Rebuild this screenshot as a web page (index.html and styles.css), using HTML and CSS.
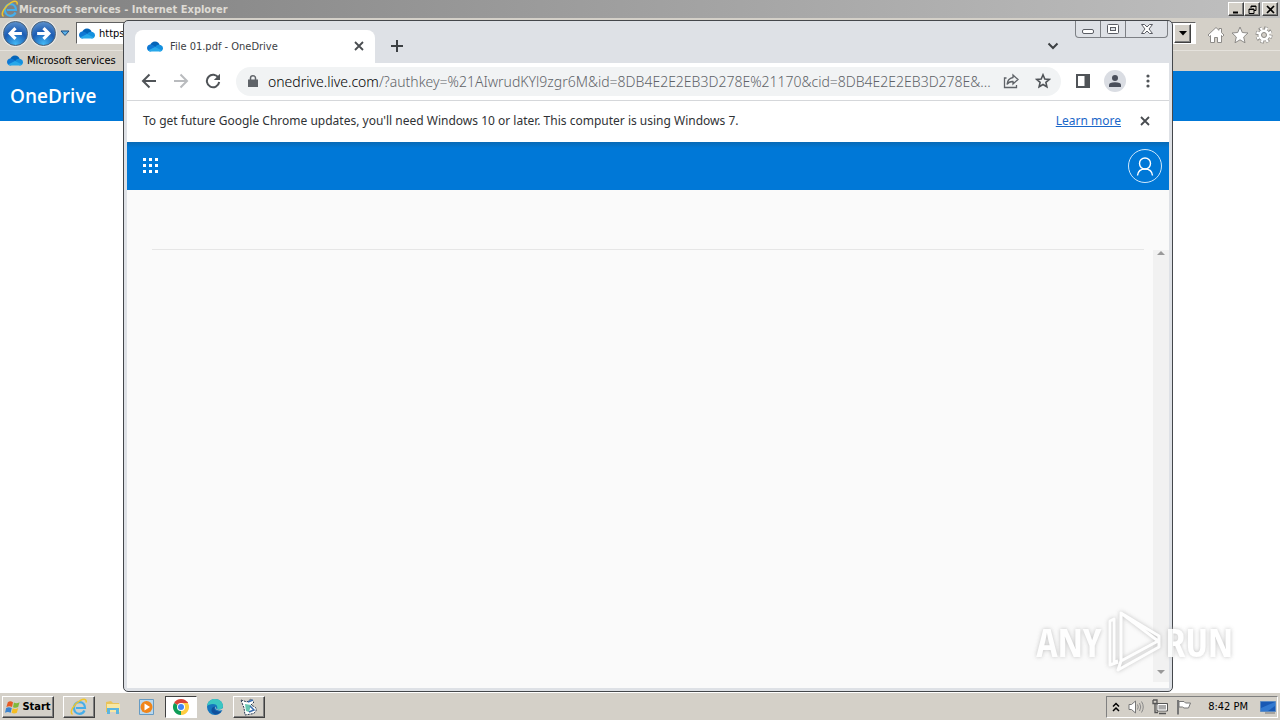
FILE: index.html
```html
<!DOCTYPE html>
<html lang="en">
<head>
<meta charset="utf-8">
<title>Desktop</title>
<link rel="stylesheet" href="styles.css">
</head>
<body>
<svg class="defs" aria-hidden="true">
  <symbol id="cloud" viewBox="0 0 16 11">
    <path d="M3 5C3.500 2 5.500 .500 8 .500C10.500 .500 12 2 12.600 3.800L8 7Z" fill="#0364b8"/>
    <path d="M3.500 3.600C1.500 3.600 0 5.200 0 7.100C0 9 1.500 10.500 3.500 10.500L11 7L6 4.200C5.200 3.800 4.400 3.600 3.500 3.600Z" fill="#0f78d4"/>
    <path d="M12 3.700C14.200 3.700 16 5.200 16 7.200C16 9.200 14.500 10.500 12.700 10.500L8 6.500C8.700 4.800 10 3.700 12 3.700Z" fill="#1490df"/>
    <path d="M1 9.500L8 6L15 9.600C14.500 10.200 13.700 10.500 12.700 10.500H3.500C2.500 10.500 1.600 10.100 1 9.500Z" fill="#28a8ea"/>
  </symbol>
  <symbol id="ie" viewBox="0 0 18 18">
    <path d="M14.500 12.500C13.500 14.800 11.700 15.800 9.500 15.800C6 15.800 4 13.200 4 10C4 6.700 6.200 4.200 9.500 4.200C12.800 4.200 15 6.500 15 10H6" fill="none" stroke="#45aeea" stroke-width="2.200"/>
    <path d="M2.500 16.500C-1 14 4 6 10 2.700C14 .500 17 1 16 4.500" fill="none" stroke="#f0c52c" stroke-width="1.500"/>
  </symbol>
  <symbol id="arrow" viewBox="0 0 16 16">
    <path d="M15 8H2M8.500 1.500L2 8L8.500 14.500" fill="none" stroke="currentColor" stroke-width="2"/>
  </symbol>
  <symbol id="cross" viewBox="0 0 10 10">
    <path d="M1 1L9 9M9 1L1 9" fill="none" stroke="currentColor" stroke-width="1.800"/>
  </symbol>
</svg>

<div class="desktop">
  <section class="ie">
    <header class="ie-title">
      <svg class="i18"><use href="#ie"/></svg>
      <span class="ie-name">Microsoft services - Internet Explorer</span>
      <div class="classic-buttons">
        <button class="raised" aria-label="Minimize"><svg viewBox="0 0 9 9"><path d="M1 7.500H6" stroke="#000" stroke-width="2"/></svg></button>
        <button class="raised" aria-label="Restore"><svg viewBox="0 0 9 9"><path d="M3 3V1H8V5.500H6M1 4H6V8.500H1ZM3 1.500H8M1 4.500H6" fill="none" stroke="#000"/></svg></button>
        <button class="raised last" aria-label="Close"><svg viewBox="0 0 9 9"><path d="M1 1L8 8M8 1L1 8" stroke="#000" stroke-width="1.700"/></svg></button>
      </div>
    </header>
    <div class="ie-nav">
      <button class="orb" aria-label="Back"><svg viewBox="0 0 16 16"><path d="M14 8H3M8 3L3 8L8 13" fill="none" stroke="#fff" stroke-width="3"/></svg></button>
      <button class="orb" aria-label="Forward"><svg viewBox="0 0 16 16"><path d="M2 8H13M8 3L13 8L8 13" fill="none" stroke="#fff" stroke-width="3"/></svg></button>
      <button class="plain recent" aria-label="Recent pages"><svg viewBox="0 0 10 7"><path d="M1 1H9L5 5.500Z" fill="#5cb2ea" stroke="#174a80"/></svg></button>
      <div class="ie-address">
        <svg class="cloud"><use href="#cloud"/></svg>
        <input class="ie-input" aria-label="Address" value="https://onedrive.live.com/">
        <button class="raised drop" aria-label="Show address list"><svg viewBox="0 0 8 5"><path d="M0 0H8L4 4.500Z" fill="#000"/></svg></button>
      </div>
      <div class="ie-tools">
        <button class="plain" aria-label="Home"><svg viewBox="0 0 18 18"><path d="M1 9L9 1.500L12 4.300V2.500H14.500V6.700L17 9L15.500 10.500L14.500 9.500V16.500H10.500V11.500H7.500V16.500H3.500V9.500L2.500 10.500Z" fill="#fff" stroke="#8d8b88"/></svg></button>
        <button class="plain" aria-label="Favorites"><svg viewBox="0 0 18 18"><path d="M9 1L11.300 6.500L17 7L12.700 11L14 16.800L9 13.800L4 16.800L5.300 11L1 7L6.700 6.500Z" fill="#fff" stroke="#8d8b88"/></svg></button>
        <button class="plain" aria-label="Tools"><svg viewBox="0 0 18 18"><circle cx="9" cy="9" r="6.700" fill="none" stroke="#8d8b88" stroke-width="3.600" stroke-dasharray="3.300 1.960"/><circle cx="9" cy="9" r="5.900" fill="none" stroke="#8d8b88" stroke-width="1"/><circle cx="9" cy="9" r="6.500" fill="none" stroke="#fff" stroke-width="2.800" stroke-dasharray="2.200 2.900" stroke-dashoffset="-.500"/><circle cx="9" cy="9" r="4" fill="#d4d0c8" stroke="#fff" stroke-width="3"/><circle cx="9" cy="9" r="2.500" fill="#d4d0c8" stroke="#8d8b88"/></svg></button>
      </div>
    </div>
    <div class="ie-favs">
      <svg class="cloud"><use href="#cloud"/></svg>
      <span>Microsoft services</span>
    </div>
    <div class="ie-brand">OneDrive</div>
    <div class="ie-page"></div>
  </section>

  <footer class="taskbar">
    <button class="raised start">
      <svg viewBox="0 0 17 16"><path d="M3 3Q5.500 1 8.500 3L7.500 8Q4.500 6.500 1.500 8Z" fill="#e65b25"/><path d="M9.500 3.300Q12 5 15.500 3L14 8Q11.500 9.500 8.500 8.200Z" fill="#80b93b"/><path d="M1.200 9Q4 7.500 7.200 9L6 14Q3 12.500 0 14Z" fill="#3a83cf"/><path d="M8.200 9.300Q11 11 14 9L12.600 14Q10 15.500 7 14.200Z" fill="#f5bd22"/></svg>
      Start
    </button>
    <div class="tasks">
      <button class="task raised" aria-label="Internet Explorer"><svg class="i18"><use href="#ie"/></svg></button>
      <button class="task" aria-label="File Explorer"><svg viewBox="0 0 18 18"><path d="M2 4L7 3L9 5H15V14H2Z" fill="#e9c35b"/><path d="M3 6H16V14H3Z" fill="#f8e7a2"/><path d="M3 16V10H15V16H12V12H6V16Z" fill="#5cb5df"/></svg></button>
      <button class="task" aria-label="Media Player"><svg viewBox="0 0 18 18"><path d="M1.500 1.500H15.500V16.500H1.500Z" fill="#b9d8ee" stroke="#669bc3"/><circle cx="8.500" cy="9" r="6" fill="#f08519"/><path d="M6.500 5.500L12 9L6.500 12.500Z" fill="#fff"/></svg></button>
      <button class="task active" aria-label="Google Chrome"><svg viewBox="0 0 18 18"><path d="M9 9L2.070 5A8 8 0 0 1 15.930 5Z" fill="#db4437"/><path d="M9 9L15.930 5A8 8 0 0 1 9 17Z" fill="#ffcd40"/><path d="M9 9L9 17A8 8 0 0 1 2.070 5Z" fill="#0f9d58"/><path d="M9 5H16L13 11Z" fill="#ffcd40"/><path d="M9 5H16L15.500 4H8Z" fill="#db4437"/><circle cx="9" cy="9" r="4" fill="#fff"/><circle cx="9" cy="9" r="3" fill="#4285f4"/></svg></button>
      <button class="task" aria-label="Microsoft Edge"><svg viewBox="0 0 18 18"><circle cx="9" cy="9" r="8" fill="#1676bd"/><path d="M1 8C2 3 5 1 9 1C14 1 17 4.500 17 8C17 11 14.500 12 11 11.500C12 9 11 6 7 6C4 6 2 7 1 8Z" fill="#3bc6c2"/><path d="M9 8.500C7.500 11 9 14 15.500 13.500C13 16 10 17 8 16C4 14 5 9 9 8.500Z" fill="#10509c"/><path d="M9.500 8.500C8.500 11 11 13.500 17 12V10C15 12 12 12 10.500 11.200Z" fill="#d4d0c8"/></svg></button>
      <button class="task raised" aria-label="Utility"><svg viewBox="0 0 18 18"><path d="M1 2L7 4L11 1L14 4L11 7L15 9C18 12 15 16 11 16L5 17L4 10Z" fill="#fff" stroke="#26384e" stroke-dasharray="2 1"/><path d="M5 6L11 7L9 14L6 13Z" fill="#69c6b2"/><path d="M8 4L13 2M10 8L14 12L9 14" fill="none" stroke="#376cae" stroke-width="1.500"/></svg></button>
    </div>
    <div class="tray">
      <button class="plain chev" aria-label="Show hidden icons"><svg viewBox="0 0 8 10"><path d="M1 4.500L4 1.500L7 4.500M1 9L4 6L7 9" fill="none" stroke="#000" stroke-width="1.500"/></svg></button>
      <button class="plain" aria-label="Volume"><svg viewBox="0 0 16 16"><path d="M1 5.500H3.500L7.500 2V14L3.500 10.500H1Z" fill="#fff" stroke="#777"/><path d="M9.500 5.500Q11 8 9.500 10.500M11.500 4Q14 8 11.500 12M13.500 2.500Q17 8 13.500 13.500" fill="none" stroke="#888"/></svg></button>
      <button class="plain" aria-label="Network"><svg viewBox="0 0 16 16"><path d="M5 4.500H15.500V12H5Z" fill="#bbb" stroke="#555"/><path d="M6 5.500H14.500V11H6Z" fill="#aaa" stroke="#fff"/><path d="M7 14.500H14M1 1V4.500H5V1H1M3 4.500V13.500H6" fill="none" stroke="#555" stroke-width="1.300"/></svg></button>
      <button class="plain" aria-label="Action Center"><svg viewBox="0 0 16 16"><path d="M2 1V15.500" stroke="#777" stroke-width="2"/><path d="M3 2.500H8L9.500 4H14.500L12.500 9H8L6.500 8H3Z" fill="#fff" stroke="#777"/></svg></button>
      <span class="clock">8:42 PM</span>
      <button class="plain" aria-label="Show desktop"><svg viewBox="0 0 16 16"><path d="M.500 2.500H15.500V12.500H.500Z" fill="#1959b4" stroke="#5b8ac2"/><path d="M1 9L15 3V7L8 12H1Z" fill="#3279d0"/><path d="M5 14H15" stroke="#777"/></svg></button>
    </div>
  </footer>

  <section class="chrome">
    <header class="tabstrip">
      <div class="tab">
        <svg class="cloud"><use href="#cloud"/></svg>
        <span class="tab-name">File 01.pdf - OneDrive</span>
        <button class="plain x" aria-label="Close tab"><svg><use href="#cross"/></svg></button>
      </div>
      <button class="plain newtab" aria-label="New tab"><svg viewBox="0 0 12 12"><path d="M6 0V12M0 6H12" stroke="#3c4043" stroke-width="2"/></svg></button>
      <button class="plain search" aria-label="Search tabs"><svg viewBox="0 0 12 8"><path d="M1.500 1.500L6 6L10.500 1.500" fill="none" stroke="#3c4043" stroke-width="2"/></svg></button>
      <div class="caption">
        <button aria-label="Minimize"><svg viewBox="0 0 14 12"><rect x="1.500" y="6.500" width="11" height="4" rx="1.500" fill="#fff" stroke="#5a5d64"/></svg></button>
        <button aria-label="Maximize"><svg viewBox="0 0 14 12"><rect x="1.500" y="1.500" width="11" height="9" rx="1" fill="#fff" stroke="#5a5d64"/><rect x="4.500" y="4.500" width="5" height="3" fill="#dee1e6" stroke="#5a5d64"/></svg></button>
        <button class="wide" aria-label="Close"><svg viewBox="0 0 14 12"><path d="M1.500 1.500H4.500L7 4L9.500 1.500H12.500L9 6L12.500 10.500H9.500L7 8L4.500 10.500H1.500L5 6Z" fill="#fff" stroke="#5a5d64"/></svg></button>
      </div>
    </header>
    <div class="toolbar">
      <button class="plain nav" aria-label="Back"><svg><use href="#arrow"/></svg></button>
      <button class="plain nav off" aria-label="Forward" disabled><svg><use href="#arrow"/></svg></button>
      <button class="plain nav" aria-label="Reload"><svg viewBox="0 0 16 16"><path d="M13.500 5A6.200 6.200 0 1 0 14.200 9" fill="none" stroke="currentColor" stroke-width="2"/><path d="M15 .800V7H8.800Z" fill="currentColor"/></svg></button>
      <div class="omnibox">
        <svg class="lock" viewBox="0 0 10 12"><path d="M0 4.500H10V12H0Z" fill="#5f6368"/><path d="M2.500 5V3A2.500 2.200 0 0 1 7.500 3V5" fill="none" stroke="#5f6368" stroke-width="1.500"/></svg>
        <div class="url" role="textbox" aria-label="Address and search bar" tabindex="0"><b>onedrive.live.com</b>/?authkey=%21AIwrudKYl9zgr6M&amp;id=8DB4E2E2EB3D278E%21170&amp;cid=8DB4E2E2EB3D278E&amp;...</div>
        <button class="plain" aria-label="Share"><svg viewBox="0 0 16 16"><path d="M3.500 5H1.500V14.500H13.500V12" fill="none" stroke="#5f6368" stroke-width="1.300"/><path d="M10 2L15 6.500L10 11V8.500Q6 8.300 4 11.500Q4.500 5.500 10 4.500Z" fill="none" stroke="#5f6368" stroke-width="1.300"/></svg></button>
        <button class="plain" aria-label="Bookmark"><svg viewBox="0 0 16 16"><path d="M8 1.800L9.800 6L14.300 6.400L10.900 9.400L11.900 13.800L8 11.500L4.100 13.800L5.100 9.400L1.700 6.400L6.200 6Z" fill="none" stroke="#505458" stroke-width="1.600"/></svg></button>
      </div>
      <button class="plain side" aria-label="Side panel"><svg viewBox="0 0 16 16"><path d="M2 2H14V14H2Z" fill="none" stroke="#505458" stroke-width="2"/><path d="M9.500 2H14V14H9.500Z" fill="#505458"/></svg></button>
      <button class="plain profile" aria-label="Profile"><svg viewBox="0 0 22 22"><circle cx="11" cy="11" r="11" fill="#dadde3"/><circle cx="11" cy="8" r="3" fill="#4a4f5b"/><path d="M5 17V15Q5 12.300 11 12.300Q17 12.300 17 15V17Z" fill="#4a4f5b"/></svg></button>
      <button class="plain more" aria-label="Menu"><svg viewBox="0 0 4 14"><circle cx="2" cy="2" r="1.600" fill="#505458"/><circle cx="2" cy="7" r="1.600" fill="#505458"/><circle cx="2" cy="12" r="1.600" fill="#505458"/></svg></button>
    </div>
    <div class="infobar">
      <span class="notice">To get future Google Chrome updates, you'll need Windows 10 or later. This computer is using Windows 7.</span>
      <a class="learn" href="#">Learn more</a>
      <button class="plain x" aria-label="Dismiss"><svg><use href="#cross"/></svg></button>
    </div>
    <div class="suite">
      <button class="plain" aria-label="App launcher"><svg class="waffle" viewBox="0 0 16 16"><path d="M0 1.500H3M6 1.500H9M12 1.500H15M0 7.500H3M6 7.500H9M12 7.500H15M0 13.500H3M6 13.500H9M12 13.500H15" stroke="#fff" stroke-width="3"/></svg></button>
      <button class="plain" aria-label="Account"><svg class="me" viewBox="0 0 34 34"><circle cx="17" cy="17" r="16.500" fill="none" stroke="#cfe8fb"/><circle cx="17" cy="14.500" r="5.500" fill="none" stroke="#fff" stroke-width="1.400"/><path d="M9.500 26.500C10 22 13 20 17 20S24 22 24.500 26.500" fill="none" stroke="#fff" stroke-width="1.400"/></svg></button>
    </div>
    <main class="viewer">
      <div class="commands"></div>
      <div class="stage">
        <div class="scroll">
          <svg viewBox="0 0 8 5"><path d="M0 5L4 1L8 5Z" fill="#999"/></svg>
          <svg viewBox="0 0 8 5"><path d="M0 0L4 4L8 0Z" fill="#999"/></svg>
        </div>
      </div>
    </main>
  </section>

  <div class="watermark">
    <span>ANY</span>
    <svg viewBox="0 0 58 64"><path d="M14 52L10 53V10L6 12V56L14 53M17 4V52L54 32Z M17 52L14 61L55 38V27L17 4" fill="none" stroke="#fff" stroke-width="3" stroke-linejoin="round"/></svg>
    <span>RUN</span>
  </div>
</div>
</body>
</html>
```
FILE: styles.css
```css
* { box-sizing: border-box; }
body { margin: 0; font-family: "DejaVu Sans Condensed", "DejaVu Sans", sans-serif; font-size: 11px; color: #000; }
button { font: inherit; color: inherit; margin: 0; padding: 0; border: 0; background: none; display: flex; align-items: center; justify-content: center; }
svg { display: block; flex: none; }
.defs { position: absolute; width: 0; height: 0; }
.desktop { position: relative; display: flex; flex-direction: column; height: 100vh; overflow: hidden; background: #d4d0c8; }
.i18 { width: 18px; height: 18px; }
.cloud { width: 16px; height: 11px; }
.raised { background: #d4d0c8; border: 1px solid; border-color: #fff #404040 #404040 #fff; box-shadow: inset -1px -1px #808080; }

.ie { flex: 1; display: flex; flex-direction: column; min-height: 0; }
.ie-title { display: flex; align-items: center; height: 18px; padding: 0 2px 0 1px; background: linear-gradient(90deg, #808080, #c0c0c0); }
.ie-name { flex: 1; color: #dedbd4; font-weight: bold; }
.classic-buttons { display: flex; }
.classic-buttons button { width: 16px; height: 14px; }
.classic-buttons .last { margin-left: 2px; }
.classic-buttons svg { width: 9px; height: 9px; }
.ie-nav { display: flex; align-items: center; height: 32px; padding: 0 7px 2px 3px; gap: 3px; }
.orb { width: 25px; height: 25px; border-radius: 50%; border: 1px solid #47617c; background: radial-gradient(circle at 50% 95%, #43b8f5, #1c5cb4 50%, #5d91cb 90%); box-shadow: 0 0 0 1px #e8e8e8; }
.orb svg { width: 17px; height: 17px; }
.recent { width: 12px; }
.recent svg { width: 10px; height: 7px; }
.ie-address { flex: 1; display: flex; align-items: center; height: 22px; margin-left: 2px; padding: 1px 4px 1px 2px; gap: 4px; background: #fff; border: 1px solid; border-color: #606060 #fff #fff #606060; }
.ie-input { flex: 1; min-width: 0; border: 0; padding: 0; font: inherit; background: none; }
.drop { width: 17px; height: 19px; }
.drop svg { width: 8px; height: 5px; }
.ie-tools { display: flex; gap: 6px; padding: 3px 0 0 8px; }
.ie-tools svg { width: 18px; height: 18px; }
.ie-favs { display: flex; align-items: center; gap: 4px; height: 21px; padding: 0 0 2px 7px; border-top: 1px solid #e5e2dc; }
.ie-brand { height: 50px; padding-left: 10px; background: #0078d7; color: #fff; font: 600 19px/50px "Open Sans", "Noto Sans", sans-serif; }
.ie-page { flex: 1; background: #fff; }

.taskbar { display: flex; align-items: center; height: 28px; padding: 0 2px; border-top: 1px solid #fff; }
.start { gap: 1px; width: 52px; height: 22px; font-weight: bold; font-size: 11px; }
.start svg { width: 16px; height: 16px; }
.tasks { flex: 1; display: flex; gap: 2px; padding-left: 9px; }
.task { width: 32px; height: 22px; }
.task svg { width: 18px; height: 18px; }
.task.active { background: #fff; border: 1px solid; border-color: #404040 #fff #fff #404040; }
.tray { display: flex; align-items: center; gap: 8px; height: 22px; padding: 0 1px 0 5px; border: 1px solid; border-color: #808080 #fff #fff #808080; }
.tray svg { width: 16px; height: 16px; }
.tray .chev svg { width: 8px; height: 10px; }
.clock { padding: 0 4px 0 8px; }

.chrome { position: absolute; left: 123px; right: 107px; top: 20px; bottom: 28px; display: flex; flex-direction: column; padding: 0 3px 3px; background: #dee1e6; border: 1px solid #44474b; border-radius: 5px; overflow: hidden; }
.tabstrip { display: flex; align-items: center; height: 42px; padding-left: 8px; }
.tab { display: flex; align-items: center; align-self: flex-end; gap: 7px; width: 240px; height: 33px; padding: 0 11px 1px 12px; border-radius: 8px 8px 0 0; background: #fff; color: #3c4043; }
.tab-name { flex: 1; }
.x svg { width: 10px; height: 10px; color: #484c50; }
.newtab { padding: 8px 0 0 16px; }
.newtab svg { width: 12px; height: 12px; }
.search { margin-left: auto; padding: 8px 16px 0 0; }
.search svg { width: 12px; height: 8px; }
.caption { display: flex; align-self: flex-start; height: 17px; margin-right: 1px; border: 1px solid #7d8085; border-top: 0; border-radius: 0 0 4px 4px; }
.caption button { width: 25px; border-right: 1px solid #7d8085; }
.caption .wide { width: 41px; border: 0; }
.caption svg { width: 14px; height: 12px; }
.toolbar { display: flex; align-items: center; height: 38px; padding: 0 16px 1px 14px; background: #fff; border-bottom: 1px solid #d5d7da; color: #505458; }
.nav { margin-right: 16px; }
.nav svg { width: 16px; height: 16px; }
.off { color: #b9bbbe; }
.off svg { transform: rotate(180deg); }
.omnibox { flex: 1; min-width: 0; display: flex; align-items: center; gap: 16px; height: 29px; margin: 0 14px 0 -1px; padding: 0 10px 0 12px; border-radius: 15px; background: #f1f3f4; }
.omnibox svg { width: 16px; height: 16px; }
.omnibox .lock { width: 10px; height: 12px; margin-right: -6px; }
.url { flex: 1; min-width: 0; white-space: nowrap; font-family: "Noto Sans", sans-serif; font-size: 14px; font-weight: 300; color: #5f6368; }
.url b { font-weight: 300; color: #000; }
.side svg { width: 16px; height: 16px; }
.profile { margin: 0 17px 0 13px; }
.profile svg { width: 22px; height: 22px; }
.more { width: 10px; }
.more svg { width: 4px; height: 14px; }
.infobar { display: flex; align-items: center; height: 41px; padding: 0 19px 2px 16px; background: #fff; font-family: "Noto Sans", sans-serif; font-size: 12px; color: #303235; }
.notice { flex: 1; white-space: nowrap; }
.learn { margin-right: 19px; color: #1a67c9; }
.suite { display: flex; align-items: center; justify-content: space-between; height: 48px; padding: 0 7px 0 16px; background: linear-gradient(#0869b5, #0078d7 6px); }
.waffle { width: 16px; height: 16px; }
.me { width: 34px; height: 34px; }
.viewer { flex: 1; display: flex; flex-direction: column; background: #fafafa; }
.commands { height: 60px; margin: 0 25px; border-bottom: 1px solid #e6e6e6; }
.stage { flex: 1; display: flex; justify-content: flex-end; padding-bottom: 6px; }
.scroll { display: flex; flex-direction: column; justify-content: space-between; width: 16px; padding: 0 4px 7px; background: #f1f1f1; }
.scroll svg { width: 8px; height: 5px; }

.watermark { position: absolute; right: 47px; bottom: 47px; display: flex; align-items: center; gap: 3px; color: #fff; font: 300 40px "Open Sans Condensed", "Liberation Sans Narrow", "Liberation Sans", sans-serif; filter: drop-shadow(0 0 2px #bbb); opacity: .9; }
.watermark svg { width: 58px; height: 64px; }
```
